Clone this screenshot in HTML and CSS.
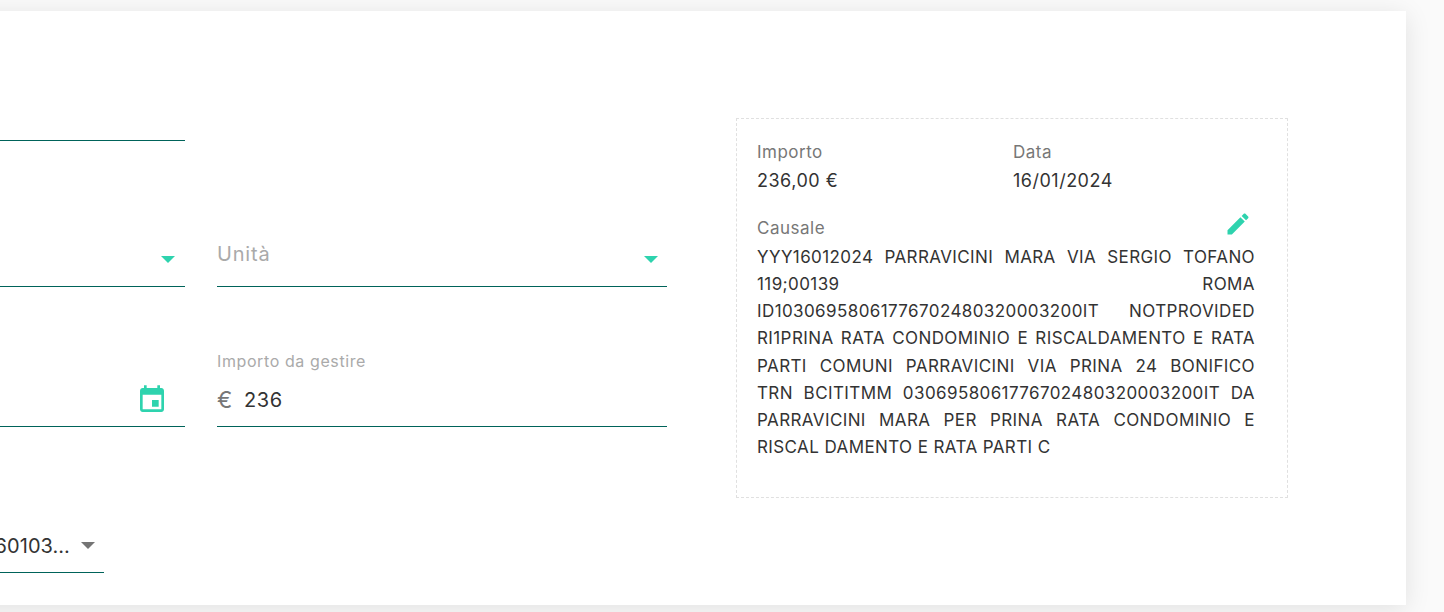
FILE: index.html
```html
<!DOCTYPE html>
<html lang="it">
<head>
    <meta charset="UTF-8">
    <meta name="viewport" content="width=device-width, initial-scale=1.0">
    <title>Gestione movimento</title>
    <link rel="stylesheet" href="styles.css">
</head>
<body>
    <div class="card">
        <form class="form">
            <div class="row">
                <div class="field"></div>
            </div>
            <div class="row">
                <div class="field field-select field-select-wide">
                    <span class="arrow"></span>
                </div>
                <div class="field field-select">
                    <span class="placeholder">Unità</span>
                    <span class="arrow"></span>
                </div>
            </div>
            <div class="row">
                <div class="field field-date">
                    <svg class="icon-date" viewBox="0 0 24 24"><path d="M17 12h-5v5h5v-5zM16 1v2H8V1H6v2H5c-1.11 0-1.99.9-1.99 2L3 19c0 1.1.89 2 2 2h14c1.1 0 2-.9 2-2V5c0-1.1-.9-2-2-2h-1V1h-2zm3 18H5V8h14v11z"/></svg>
                </div>
                <div class="field field-amount">
                    <label class="float-label">Importo da gestire</label>
                    <span class="prefix">€</span>
                    <span class="value">236</span>
                </div>
            </div>
            <div class="row">
                <div class="field field-account">
                    <span class="value">60103…</span>
                    <span class="arrow arrow-grey"></span>
                </div>
            </div>
        </form>

        <div class="details">
            <div class="details-top">
                <div>
                    <div class="details-label">Importo</div>
                    <div class="details-value">236,00 €</div>
                </div>
                <div>
                    <div class="details-label">Data</div>
                    <div class="details-value">16/01/2024</div>
                </div>
            </div>
            <div class="causale-head">
                <span class="details-label">Causale</span>
                <svg class="icon-edit" viewBox="0 0 24 24"><path d="M3 17.25V21h3.75L17.81 9.94l-3.75-3.75L3 17.25zM20.71 7.04c.39-.39.39-1.02 0-1.41l-2.34-2.34c-.39-.39-1.02-.39-1.41 0l-1.83 1.83 3.75 3.75 1.83-1.83z"/></svg>
            </div>
            <div class="causale">
                <span class="line">YYY16012024 PARRAVICINI MARA VIA SERGIO TOFANO</span>
                <span class="line">119;00139 ROMA</span>
                <span class="line">ID10306958061776702480320003200IT NOTPROVIDED</span>
                <span class="line">RI1PRINA RATA CONDOMINIO E RISCALDAMENTO E RATA</span>
                <span class="line">PARTI COMUNI PARRAVICINI VIA PRINA 24 BONIFICO</span>
                <span class="line">TRN BCITITMM 0306958061776702480320003200IT DA</span>
                <span class="line">PARRAVICINI MARA PER PRINA RATA CONDOMINIO E</span>
                <span class="line line-last">RISCAL DAMENTO E RATA PARTI C</span>
            </div>
        </div>
    </div>
</body>
</html>
```

FILE: styles.css
```css
body {
    margin: 0;
    height: 612px;
    overflow: hidden;
    background-color: #fafafa;
    font-family: Inter, "Open Sans", sans-serif;
    color: #333;
}

.card {
    display: flex;
    align-items: flex-start;
    gap: 69px;
    width: 1706px;
    height: 594px;
    box-sizing: border-box;
    margin: 11px 0 0 -300px;
    padding: 82px 0 0 35px;
    background-color: #fff;
    box-shadow: 0 4px 24px rgba(0, 0, 0, 0.1);
}

.form {
    display: flex;
    flex-direction: column;
    gap: 98px;
    width: 932px;
}

.row {
    display: flex;
    gap: 32px;
}

.field {
    position: relative;
    display: flex;
    width: 450px;
    height: 48px;
    box-sizing: border-box;
    border-bottom: 1px solid #00635a;
}

.field-select {
    align-items: flex-start;
    justify-content: space-between;
    padding-right: 9px;
}

.field-select-wide {
    padding-right: 10px;
}

.placeholder {
    margin-top: 3px;
    font-size: 20px;
    letter-spacing: 0.8px;
    line-height: 25px;
    color: #aaa;
}

.arrow {
    width: 0;
    height: 0;
    margin: 17px 0 0 auto;
    border-left: 7.5px solid transparent;
    border-right: 7.5px solid transparent;
    border-top: 7.5px solid #2ed3ae;
}

.arrow-grey {
    margin: 0 0 0 11px;
    border-top-color: #757575;
}

.field-date,
.field-amount {
    height: 42px;
}

.field-date {
    justify-content: flex-end;
    padding-right: 17px;
}

.icon-date {
    width: 32px;
    height: 32px;
    margin-top: -1px;
    fill: #2ed3ae;
}

.field-amount {
    align-items: flex-start;
    gap: 11px;
    padding-top: 1px;
}

.float-label {
    position: absolute;
    top: -34px;
    left: 0;
    font-size: 16px;
    letter-spacing: 0.6px;
    line-height: 20px;
    color: #aaa;
}

.prefix,
.value {
    font-size: 20px;
    letter-spacing: 0.6px;
    line-height: 28px;
}

.prefix {
    font-size: 23px;
    color: #777;
}

.value {
    color: #333;
}

.field-account {
    width: 369px;
    align-items: center;
    justify-content: flex-end;
    padding: 0 9px 6px 0;
}

.field-account .value {
    letter-spacing: 0.1px;
}

.details {
    width: 552px;
    height: 380px;
    box-sizing: border-box;
    margin-top: 25px;
    padding: 20px 20px 0;
    border: 1px dashed #e0e0e0;
}

.details-top {
    display: grid;
    grid-template-columns: 256px 1fr;
}

.details-label {
    font-size: 17px;
    letter-spacing: 0.5px;
    line-height: 26px;
    color: #777;
}

.details-value {
    margin-top: 2px;
    font-size: 18px;
    letter-spacing: 0.5px;
    line-height: 28px;
    color: #333;
}

.causale-head {
    display: flex;
    justify-content: space-between;
    align-items: flex-start;
    height: 29px;
    margin-top: 20px;
    margin-right: 15px;
}

.icon-edit {
    width: 28px;
    height: 28px;
    margin-top: -5px;
    fill: #2ed3ae;
}

.causale {
    width: 498px;
    font-size: 17px;
    letter-spacing: 0.4px;
    line-height: 27.15px;
    color: #333;
}

.line {
    display: block;
    white-space: nowrap;
    text-align: justify;
    text-align-last: justify;
}

.line-last {
    text-align-last: left;
}
```
